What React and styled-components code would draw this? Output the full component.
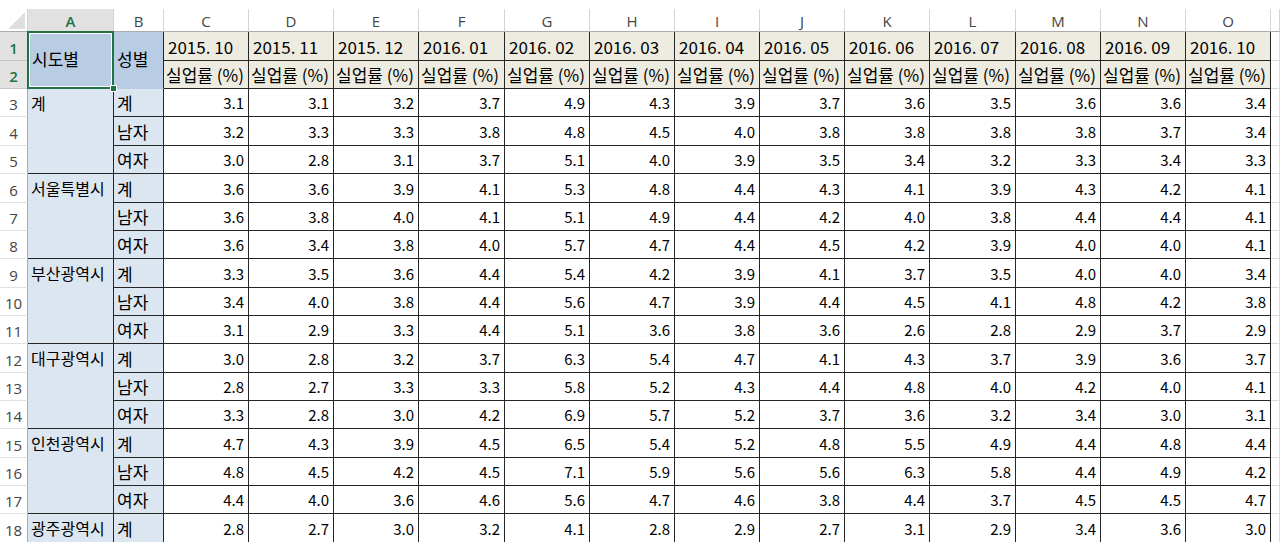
import React from 'react';
import styled, { createGlobalStyle, css } from 'styled-components';

const GlobalStyle = createGlobalStyle`
  html, body {
    margin: 0;
    padding: 0;
    background: #fff;
    overflow: hidden;
  }
`;

const months = [
  '2015. 10', '2015. 11', '2015. 12', '2016. 01', '2016. 02', '2016. 03', '2016. 04',
  '2016. 05', '2016. 06', '2016. 07', '2016. 08', '2016. 09', '2016. 10',
];

const letters = ['A', 'B', 'C', 'D', 'E', 'F', 'G', 'H', 'I', 'J', 'K', 'L', 'M', 'N', 'O', ''];

// the last group is cut by the window, so only its first row is listed
const groups = [
  {
    region: '계',
    rows: [
      ['계', '3.1 3.1 3.2 3.7 4.9 4.3 3.9 3.7 3.6 3.5 3.6 3.6 3.4'],
      ['남자', '3.2 3.3 3.3 3.8 4.8 4.5 4.0 3.8 3.8 3.8 3.8 3.7 3.4'],
      ['여자', '3.0 2.8 3.1 3.7 5.1 4.0 3.9 3.5 3.4 3.2 3.3 3.4 3.3'],
    ],
  },
  {
    region: '서울특별시',
    rows: [
      ['계', '3.6 3.6 3.9 4.1 5.3 4.8 4.4 4.3 4.1 3.9 4.3 4.2 4.1'],
      ['남자', '3.6 3.8 4.0 4.1 5.1 4.9 4.4 4.2 4.0 3.8 4.4 4.4 4.1'],
      ['여자', '3.6 3.4 3.8 4.0 5.7 4.7 4.4 4.5 4.2 3.9 4.0 4.0 4.1'],
    ],
  },
  {
    region: '부산광역시',
    rows: [
      ['계', '3.3 3.5 3.6 4.4 5.4 4.2 3.9 4.1 3.7 3.5 4.0 4.0 3.4'],
      ['남자', '3.4 4.0 3.8 4.4 5.6 4.7 3.9 4.4 4.5 4.1 4.8 4.2 3.8'],
      ['여자', '3.1 2.9 3.3 4.4 5.1 3.6 3.8 3.6 2.6 2.8 2.9 3.7 2.9'],
    ],
  },
  {
    region: '대구광역시',
    rows: [
      ['계', '3.0 2.8 3.2 3.7 6.3 5.4 4.7 4.1 4.3 3.7 3.9 3.6 3.7'],
      ['남자', '2.8 2.7 3.3 3.3 5.8 5.2 4.3 4.4 4.8 4.0 4.2 4.0 4.1'],
      ['여자', '3.3 2.8 3.0 4.2 6.9 5.7 5.2 3.7 3.6 3.2 3.4 3.0 3.1'],
    ],
  },
  {
    region: '인천광역시',
    rows: [
      ['계', '4.7 4.3 3.9 4.5 6.5 5.4 5.2 4.8 5.5 4.9 4.4 4.8 4.4'],
      ['남자', '4.8 4.5 4.2 4.5 7.1 5.9 5.6 5.6 6.3 5.8 4.4 4.9 4.2'],
      ['여자', '4.4 4.0 3.6 4.6 5.6 4.7 4.6 3.8 4.4 3.7 4.5 4.5 4.7'],
    ],
  },
  {
    region: '광주광역시',
    rows: [['계', '2.8 2.7 3.0 3.2 4.1 2.8 2.9 2.7 3.1 2.9 3.4 3.6 3.0']],
  },
];

// C..O are 85.15px wide on screen, rounded per boundary
const monthCols = months.map(
  (_, k) => Math.round(85.15 * (k + 1)) - Math.round(85.15 * k)
);
const columns = ['28px', '86px', '50px', ...monthCols.map((w) => `${w}px`), '1fr'].join(' ');

// body rows are ~28.35px on screen, rounded per boundary
const rowEdge = (k) => Math.round(28.35 * k + 0.4);
const bodyRows = Array.from({ length: 18 }, (_, k) => `${rowEdge(k + 1) - rowEdge(k)}px`);
const rows = ['23px', ...bodyRows].join(' ');

const GREEN = '#217346';
const LINE = '#262626';
const GRID = '#dadada';

const fills = {
  title: '#b8cce4',
  side: '#dce6f1',
  head: '#eeece1',
  plain: '#ffffff',
};

const Window = styled.div`
  width: 1280px;
  height: 542px;
  padding-top: 9px;
  box-sizing: border-box;
  overflow: hidden;
  background: #fff;
`;

const Sheet = styled.div`
  display: grid;
  grid-template-columns: ${columns};
  grid-template-rows: ${rows};
`;

const headerBase = css`
  box-sizing: border-box;
  display: flex;
  align-items: center;
  justify-content: center;
  font-family: 'Open Sans', 'Noto Sans CJK KR', sans-serif;
  font-size: 15px;
  color: ${(p) => (p.$active ? GREEN : '#444')};
  font-weight: ${(p) => (p.$active ? 600 : 400)};
  background: ${(p) => (p.$active ? '#e1e1e1' : '#fff')};
`;

const Corner = styled.div`
  box-sizing: border-box;
  border-right: 1px solid #d4d4d4;
  border-bottom: 1px solid #ababab;
  display: flex;
  align-items: flex-end;
  justify-content: flex-end;
  padding: 0 2px 2px 0;
  background: #fff;
`;

const ColHead = styled.div`
  ${headerBase}
  border-right: 1px solid #d4d4d4;
  border-bottom: 1px solid #ababab;
  padding-top: 1px;
`;

const RowHead = styled.div`
  ${headerBase}
  border-right: 1px solid #ababab;
  border-bottom: 1px solid ${(p) => (p.$active ? '#c6c6c6' : '#e1e1e1')};
  padding-top: 3px;
`;

const Cell = styled.div`
  box-sizing: border-box;
  position: relative;
  display: flex;
  align-items: ${(p) => (p.$middle ? 'center' : p.$top ? 'flex-start' : 'flex-end')};
  justify-content: ${(p) => (p.$right ? 'flex-end' : 'flex-start')};
  grid-row: ${(p) => (p.$span ? `span ${p.$span}` : 'auto')};
  padding: ${(p) =>
    p.$right ? '0 4px 3px 0' : p.$top ? `4px 0 0 ${p.$pad ?? 4}px` : `0 0 3px ${p.$pad ?? 4}px`};
  background: ${(p) => fills[p.$fill || 'plain']};
  border-right: 1px solid ${(p) => p.$edge || LINE};
  border-bottom: 1px solid ${(p) => p.$floor || LINE};
  font-family: 'Noto Sans CJK KR', 'Noto Sans', sans-serif;
  font-size: ${(p) => p.$size || 17}px;
  line-height: 20px;
  color: #000;
  white-space: nowrap;
  overflow: ${(p) => (p.$selected ? 'visible' : 'hidden')};
  z-index: ${(p) => (p.$selected ? 2 : 'auto')};
`;

const Blank = styled.div`
  box-sizing: border-box;
  border-right: 1px solid ${GRID};
  border-bottom: 1px solid ${GRID};
  background: #fff;
`;

const Selection = styled.div`
  position: absolute;
  top: -1px;
  left: -1px;
  right: -1px;
  bottom: -1px;
  border: 2px solid ${GREEN};
  box-shadow: inset 0 0 0 1px #fff;
  pointer-events: none;
`;

const FillHandle = styled.div`
  position: absolute;
  right: -5px;
  bottom: -5px;
  width: 5px;
  height: 5px;
  background: ${GREEN};
  border: 1px solid #fff;
`;

const CornerMark = () => (
  <svg width="17" height="17" viewBox="0 0 17 17">
    <polygon points="17,0 17,17 0,17" fill="#dfdfdf" />
  </svg>
);

const App = () => {
  let rowNo = 3;

  return (
    <>
      <GlobalStyle />
      <Window>
        <Sheet>
          <Corner>
            <CornerMark />
          </Corner>
          {letters.map((l, i) => (
            <ColHead key={`c${i}`} $active={l === 'A'}>
              {l}
            </ColHead>
          ))}

          <RowHead $active>1</RowHead>
          <Cell $fill="title" $span={2} $middle $selected $edge="transparent" $floor="transparent">
            시도별
            <Selection>
              <FillHandle />
            </Selection>
          </Cell>
          <Cell $fill="title" $span={2} $middle $pad={3} $floor="transparent">
            성별
          </Cell>
          {months.map((m) => (
            <Cell key={m} $fill="head" $pad={4}>
              {m}
            </Cell>
          ))}
          <Blank />

          <RowHead $active>2</RowHead>
          {months.map((m) => (
            <Cell key={`u${m}`} $fill="head" $pad={2}>
              실업률 (%)
            </Cell>
          ))}
          <Blank />

          {groups.map((g) =>
            g.rows.map(([sex, values], r) => {
              const n = rowNo++;
              const nums = values.split(' ');
              return (
                <React.Fragment key={n}>
                  <RowHead>{n}</RowHead>
                  {r === 0 && (
                    <Cell $fill="side" $span={g.rows.length} $top $pad={3} $size={16}>
                      {g.region}
                    </Cell>
                  )}
                  <Cell $fill="side" $pad={3}>
                    {sex}
                  </Cell>
                  {nums.map((v, i) => (
                    <Cell key={i} $right $size={15}>
                      {v}
                    </Cell>
                  ))}
                  <Blank />
                </React.Fragment>
              );
            })
          )}
        </Sheet>
      </Window>
    </>
  );
};

export default App;
